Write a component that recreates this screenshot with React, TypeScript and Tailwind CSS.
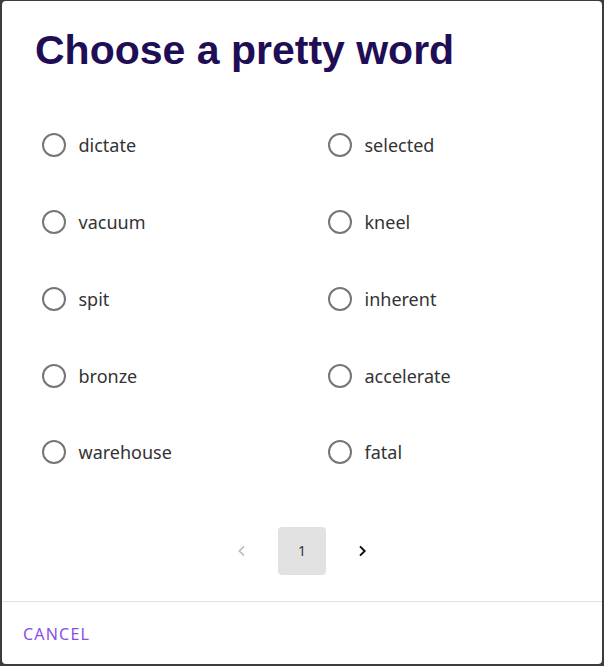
import React from "react";

const left = ["dictate", "vacuum", "spit", "bronze", "warehouse"];
const right = ["selected", "kneel", "inherent", "accelerate", "fatal"];

function Radio({ label }: { label: string }) {
  return (
    <label className="flex items-center h-[76.75px] cursor-pointer">
      <span className="w-[24px] h-[24px] rounded-full border-2 border-[#767676] box-border" />
      <span className="ml-[12.5px] text-[18px] text-[#333333] leading-none" style={{ fontFamily: '"Noto Sans", sans-serif' }}>
        {label}
      </span>
    </label>
  );
}

export default function App() {
  return (
    <div className="w-[604px] h-[666px] bg-[#3c3c3c] pt-[1px] pl-[2px] pr-[2px] pb-[2px]">
      <div className="w-full h-full bg-white rounded-[4px] flex flex-col">
        <h1
          className="pl-[33px] pt-[25px] text-[41px] font-bold text-[#1f0e56] leading-[48px]"
          style={{ fontFamily: '"Liberation Sans", Arial, sans-serif' }}
        >
          Choose a pretty word
        </h1>
        <div className="grid grid-cols-2 pl-[40px] mt-[33px]">
          <div className="flex flex-col">
            {left.map((w) => (
              <Radio key={w} label={w} />
            ))}
          </div>
          <div className="flex flex-col pl-[6px]">
            {right.map((w) => (
              <Radio key={w} label={w} />
            ))}
          </div>
        </div>
        <div className="flex items-center justify-center mt-[36px] gap-[12px]">
          <button className="w-[48px] h-[48px] flex items-center justify-center text-[#bdbdbd]">
            <svg width="16" height="16" viewBox="0 0 24 24" fill="none" stroke="currentColor" strokeWidth="2.5">
              <path d="M15 5l-7 7 7 7" />
            </svg>
          </button>
          <button
            className="w-[48px] h-[48px] rounded-[4px] bg-[#e2e2e2] text-[14px] text-[#333333]"
            style={{ fontFamily: '"Noto Sans", sans-serif' }}
          >
            1
          </button>
          <button className="w-[48px] h-[48px] flex items-center justify-center text-[#111]">
            <svg width="16" height="16" viewBox="0 0 24 24" fill="none" stroke="currentColor" strokeWidth="3">
              <path d="M9 5l7 7-7 7" />
            </svg>
          </button>
        </div>
        <div className="mt-[26px] border-t border-[#e3e3e3] flex-1 flex items-center pl-[21px] pt-[3px]">
          <span
            className="text-[16px] tracking-[1.2px] text-[#8a4fe6]"
            style={{ fontFamily: '"Noto Sans", sans-serif' }}
          >
            CANCEL
          </span>
        </div>
      </div>
    </div>
  );
}
